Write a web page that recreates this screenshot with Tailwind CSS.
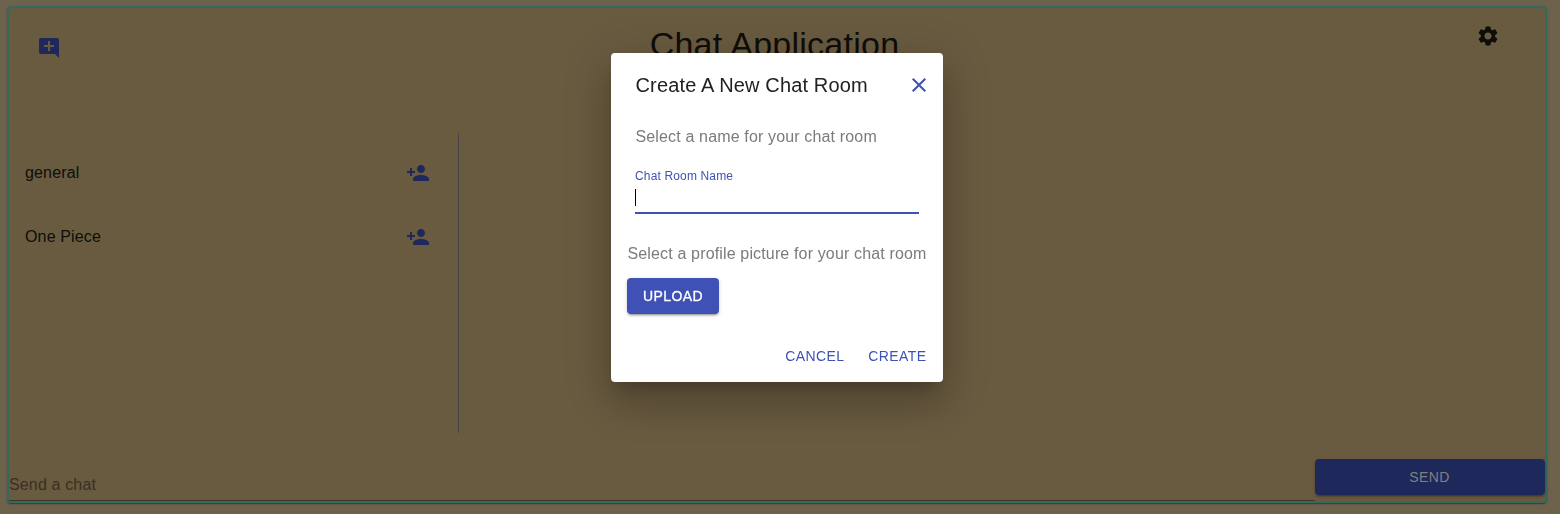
<!DOCTYPE html>
<html lang="en">
<head>
<meta charset="utf-8">
<title>Chat Application</title>
<script src="https://cdn.jsdelivr.net/npm/@tailwindcss/browser@4"></script>
</head>
<body class="h-[514px] overflow-hidden bg-[#6d624c] pt-[6px] pl-[7px] font-['Liberation_Sans',Arial,sans-serif] text-base tracking-[0.15px] text-[#0f0d09]">
<main class="flex h-[497px] w-[1540px] flex-col rounded-[4px] border-2 border-[#35695b] bg-[#695b40] shadow-[0_2px_1px_-1px_rgba(0,0,0,0.2),0_1px_1px_0_rgba(0,0,0,0.14),0_1px_3px_0_rgba(0,0,0,0.12)]">
  <header class="flex h-[125px] shrink-0 items-start justify-between pr-[45px] pl-7">
    <svg class="mt-7 size-6 fill-[#1f285a]" viewBox="0 0 24 24"><path d="M22 4c0-1.100-.9-2-2-2H4c-1.100 0-2 .9-2 2v12c0 1.100.9 2 2 2h14l4 4V4zm-5 7h-4v4h-2v-4H7V9h4V5h2v4h4v2z"/></svg>
    <h1 class="mt-[15px] ml-3 text-[34px] leading-[42px] tracking-[0.25px]">Chat Application</h1>
    <svg class="mt-4 size-6 fill-[#0f0d09]" viewBox="0 0 24 24"><path d="M19.140 12.940c.04-.3.06-.61.06-.94 0-.32-.02-.64-.07-.94l2.030-1.580c.18-.14.23-.41.12-.61l-1.920-3.320c-.12-.22-.37-.29-.59-.22l-2.390.96c-.5-.38-1.030-.7-1.620-.94l-.36-2.540c-.04-.24-.24-.41-.48-.41h-3.840c-.24 0-.43.17-.47.41l-.36 2.540c-.59.24-1.130.57-1.620.94l-2.390-.96c-.22-.08-.47 0-.59.22L2.740 8.870c-.12.21-.08.47.12.61l2.030 1.580c-.05.3-.09.63-.09.94s.02.64.07.94l-2.030 1.580c-.18.14-.23.41-.12.61l1.920 3.320c.12.22.37.29.59.22l2.390-.96c.5.38 1.030.7 1.620.94l.36 2.540c.05.24.24.41.48.41h3.840c.24 0 .44-.17.47-.41l.36-2.540c.59-.24 1.130-.56 1.620-.94l2.390.96c.22.08.47 0 .59-.22l1.920-3.320c.12-.22.07-.47-.12-.61l-2.010-1.580zM12 15.600c-1.980 0-3.600-1.620-3.600-3.600s1.620-3.600 3.600-3.600 3.600 1.620 3.600 3.600-1.620 3.600-3.600 3.600z"/></svg>
  </header>
  <ul class="h-[300px] w-[450px] shrink-0 border-r border-[#444448] pt-2">
    <li class="flex h-16 items-center justify-between pr-7 pl-4">
      <span>general</span>
      <svg class="size-6 fill-[#1f285a]" viewBox="0 0 24 24"><path d="M15 12c2.210 0 4-1.790 4-4s-1.790-4-4-4-4 1.790-4 4 1.790 4 4 4zm-9-2V7H4v3H1v2h3v3h2v-3h3v-2H6zm9 4c-2.670 0-8 1.340-8 4v2h16v-2c0-2.660-5.330-4-8-4z"/></svg>
    </li>
    <li class="flex h-16 items-center justify-between pr-7 pl-4">
      <span>One Piece</span>
      <svg class="size-6 fill-[#1f285a]" viewBox="0 0 24 24"><path d="M15 12c2.210 0 4-1.790 4-4s-1.790-4-4-4-4 1.790-4 4 1.790 4 4 4zm-9-2V7H4v3H1v2h3v3h2v-3h3v-2H6zm9 4c-2.670 0-8 1.340-8 4v2h16v-2c0-2.660-5.330-4-8-4z"/></svg>
    </li>
  </ul>
  <footer class="mt-[26px] flex h-[42px] shrink-0 items-start">
    <div class="flex h-[42px] w-[1306px] items-end border-b border-[#3d3526] pb-[3px] text-[#383022]">Send a chat</div>
    <button class="h-9 w-[230px] rounded-[4px] bg-[#1f285a] pr-px text-sm font-normal tracking-[0.4px] text-[#808080] shadow-[0_3px_1px_-2px_rgba(0,0,0,0.2),0_2px_2px_0_rgba(0,0,0,0.14),0_1px_5px_0_rgba(0,0,0,0.12)]">SEND</button>
  </footer>
</main>

<div class="fixed inset-0 flex items-start justify-center pt-[53px] pr-[6px]">
  <section role="dialog" class="flex h-[329px] w-[332px] flex-col rounded-[4px] bg-white text-[#7b7b7b] shadow-[0_11px_15px_-7px_rgba(0,0,0,0.2),0_24px_38px_3px_rgba(0,0,0,0.14),0_9px_46px_8px_rgba(0,0,0,0.12)]">
    <div class="flex h-16 items-center justify-between pr-3 pl-[24.500px]">
      <h2 class="text-xl tracking-[0.15px] text-[#212121]">Create A New Chat Room</h2>
      <svg class="size-6 fill-[#3f51b5]" viewBox="0 0 24 24"><path d="M19 6.410L17.590 5 12 10.590 6.410 5 5 6.410 10.590 12 5 17.590 6.410 19 12 13.410 17.590 19 19 17.590 13.410 12z"/></svg>
    </div>
    <p class="mt-2 pl-[24.500px] leading-6">Select a name for your chat room</p>
    <div class="mt-5 mr-6 ml-6 h-[45px] border-b-2 border-[#3f51b5]">
      <label class="block text-xs leading-[14px] text-[#3f51b5]">Chat Room Name</label>
      <div class="mt-[6px] h-[17px] w-px bg-black"></div>
    </div>
    <p class="mt-7 pl-[16.500px] leading-6 whitespace-nowrap">Select a profile picture for your chat room</p>
    <button class="mt-3 ml-4 h-9 w-[92px] shrink-0 rounded-[4px] bg-[#3f51b5] text-sm tracking-[0.4px] text-white [-webkit-text-stroke:0.3px_white] shadow-[0_3px_1px_-2px_rgba(0,0,0,0.2),0_2px_2px_0_rgba(0,0,0,0.14),0_1px_5px_0_rgba(0,0,0,0.12)]">UPLOAD</button>
    <div class="mt-auto flex h-[52px] items-center justify-end gap-6 pr-[16.500px] text-sm tracking-[0.4px] text-[#3f51b5]">
      <button>CANCEL</button>
      <button>CREATE</button>
    </div>
  </section>
</div>
</body>
</html>
